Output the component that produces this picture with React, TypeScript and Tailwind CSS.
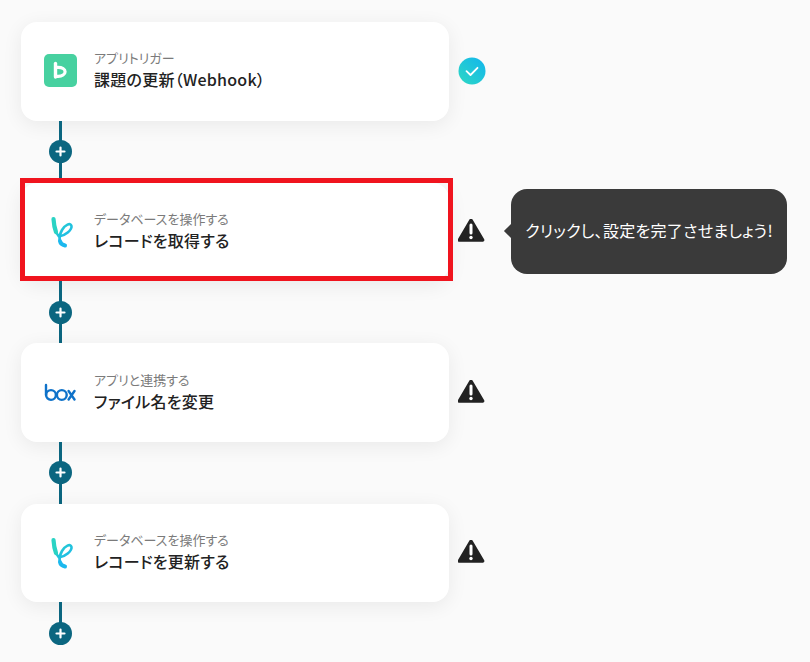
import React from "react";

const Backlog = () => (
  <svg width="34" height="34" viewBox="0 0 34 34" className="ml-[2px] block">
    <rect x="0" y="0" width="33" height="33" rx="5" fill="#47d1a0" />
    <path d="M11.5 9.5V23" stroke="#fff" strokeWidth="3.4" strokeLinecap="round" fill="none" />
    <path d="M11.5 13.4h2.6c4 0 7 1.8 7 4.3s-3 4.4-7 4.6h-2.6" stroke="#fff" strokeWidth="3.2" fill="none" />
  </svg>
);

const Loop = () => (
  <svg width="34" height="40" viewBox="0 0 34 40" className="block">
    <defs>
      <linearGradient id="lg" x1="0" y1="0" x2="0.6" y2="1">
        <stop offset="0" stopColor="#2ad3c4" />
        <stop offset="1" stopColor="#1cb8ee" />
      </linearGradient>
    </defs>
    <path
      d="M10.5 7C11 14 12.5 21 16 24.5C22 24 29 18 28.5 14C27.5 10 22 13 19 18C15.5 24 15 32.5 22 33.5"
      stroke="url(#lg)"
      strokeWidth="2.6"
      strokeLinecap="round"
      strokeLinejoin="round"
      fill="none"
    />
    <path d="M10.5 7C10.8 12 11.5 16 13 20" stroke="#2ad3c4" strokeWidth="4.2" strokeLinecap="round" fill="none" />
    <path d="M17 29C17.5 32 19.5 33 22 33.5" stroke="#1cb8ee" strokeWidth="4" strokeLinecap="round" fill="none" />
  </svg>
);

const Box = () => (
  <svg width="32" height="20" viewBox="0 0 32 20" className="block">
    <g stroke="#0f72c9" strokeWidth="2.4" fill="none" strokeLinecap="round">
      <path d="M2 2V12" />
      <circle cx="7" cy="12" r="4.9" />
      <circle cx="17.8" cy="12" r="4.9" />
      <path d="M24.6 8L30.5 16.5M30.5 8L24.6 16.5" />
    </g>
  </svg>
);

const Check = () => (
  <svg width="28" height="28" viewBox="0 0 28 28" className="block">
    <defs>
      <linearGradient id="cg" x1="0" y1="1" x2="1" y2="0">
        <stop offset="0" stopColor="#2ed8c3" />
        <stop offset="1" stopColor="#12b5ee" />
      </linearGradient>
    </defs>
    <circle cx="14" cy="14" r="13.5" fill="url(#cg)" />
    <path d="M8.5 14.2L12.5 18L19.5 10.8" stroke="#fff" strokeWidth="1.8" fill="none" strokeLinecap="round" strokeLinejoin="round" />
  </svg>
);

const Warn = () => (
  <svg width="28" height="26" viewBox="1 1.5 28 26" className="block">
    <path d="M14 3L25.5 22.5H2.5Z" fill="#222" stroke="#222" strokeWidth="3.6" strokeLinejoin="round" />
    <path d="M14 7.6V15.6" stroke="#fff" strokeWidth="3" strokeLinecap="round" />
    <circle cx="14" cy="20" r="1.7" fill="#fff" />
  </svg>
);

const Connector = ({ h }: { h: string }) => (
  <div className={`relative ml-[38px] w-[3px] bg-[#0b6680] ${h}`}>
    <div className="absolute left-[-10px] top-[19.5px] flex h-[23px] w-[23px] items-center justify-center rounded-full bg-[#0b6680]">
      <svg width="11" height="11" viewBox="0 0 11 11">
        <path d="M5.5 1.5V9.5M1.5 5.5H9.5" stroke="#fff" strokeWidth="2.2" strokeLinecap="round" />
      </svg>
    </div>
  </div>
);

const Step = ({
  icon,
  sub,
  title,
  status,
  children,
}: {
  icon: React.ReactNode;
  sub: string;
  title: string;
  status: React.ReactNode;
  children?: React.ReactNode;
}) => (
  <div className="relative flex items-center">
    <div className="flex h-[98.5px] w-[428px] items-center rounded-[16px] bg-white shadow-[0_4px_20px_rgba(0,0,0,0.07)]">
      <div className="flex w-[73px] shrink-0 items-center justify-center pl-[5px]">{icon}</div>
      <div className="flex flex-col pb-[1px]">
        <span className="text-[13px] leading-[18px] text-[#7b7b7b]">{sub}</span>
        <span className="text-[16px] font-medium leading-[25px] tracking-[0.25px] text-[#222]">{title}</span>
      </div>
    </div>
    <div className="ml-[9px] flex w-[28px] items-center justify-center">{status}</div>
    {children}
  </div>
);

export default function App() {
  return (
    <div
      className="h-[662px] w-[810px] overflow-hidden bg-[#fafafa] pl-[21px] pt-[22px] [font-feature-settings:'palt']"
      style={{ fontFamily: '"Noto Sans CJK JP", "Noto Sans", sans-serif' }}
    >
      <Step icon={<Backlog />} sub="アプリトリガー" title="課題の更新（Webhook）" status={<Check />} />
      <Connector h="h-[62.17px]" />
      <Step icon={<Loop />} sub="データベースを操作する" title="レコードを取得する" status={<Warn />}>
        <div className="pointer-events-none absolute left-[-1px] top-[-5px] h-[103px] w-[433px] border-[5px] border-[#f0141e]" />
        <div className="absolute left-[490px] top-[6px] flex h-[85px] w-[276px] items-center justify-center rounded-[16px] bg-[#3a3a3a] pb-[2px] text-[16px] font-normal tracking-[0.3px] text-white">
          <span className="absolute left-[-5px] top-[37px] h-[10px] w-[10px] rotate-45 bg-[#3a3a3a]" />
          クリックし、設定を完了させましょう!
        </div>
      </Step>
      <Connector h="h-[62.17px]" />
      <Step icon={<Box />} sub="アプリと連携する" title="ファイル名を変更" status={<Warn />} />
      <Connector h="h-[62.17px]" />
      <Step icon={<Loop />} sub="データベースを操作する" title="レコードを更新する" status={<Warn />} />
      <Connector h="h-[42px]" />
    </div>
  );
}
